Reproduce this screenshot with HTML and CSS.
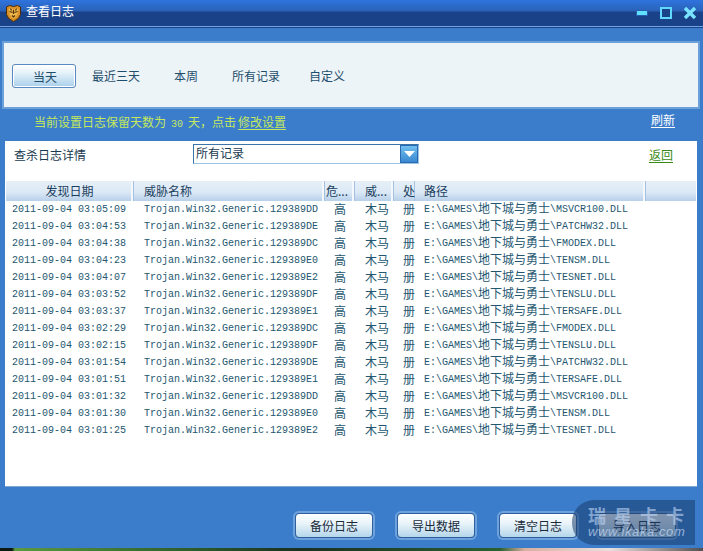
FILE: index.html
```html
<!DOCTYPE html>
<html lang="zh-CN">
<head>
<meta charset="utf-8">
<title>查看日志</title>
<link rel="stylesheet" href="styles.css">
</head>
<body>
<div class="window">
  <header class="titlebar">
    <svg class="logo" width="15" height="17" viewBox="0 0 15 17">
      <path d="M0.5 2 L3.5 0.5 L7.5 1.5 L11.5 0.5 L14.5 2 L14.5 9.5 Q13.5 14 7.5 16.5 Q1.5 14 0.5 9.5 Z" fill="#d89028" stroke="#4a2a08" stroke-width="1"/>
      <path d="M2.5 4 L5.5 3 L7.5 5 L9.5 3 L12.5 4 L11.5 9 L9.5 12.5 L7.5 13.5 L5.5 12.5 L3.5 9 Z" fill="#eeb84c"/>
      <path d="M3.5 6.5 L6.5 7.5 M11.5 6.5 L8.5 7.5 M6 10.5 L7.5 12 L9 10.5 M7.5 5 V9 M4.5 3.5 L5.5 5.5 M10.5 3.5 L9.5 5.5" stroke="#54300a" stroke-width="1.2" fill="none"/>
    </svg>
    <span class="title">查看日志</span>
    <div class="controls">
      <svg class="ctl-min" width="12" height="6" viewBox="0 0 12 6"><rect x="0.5" y="0.5" width="11" height="5" fill="#60e0ff" stroke="#2a5cb0"/></svg>
      <svg class="ctl-max" width="12" height="12" viewBox="0 0 12 12"><rect x="1" y="1" width="10" height="10" fill="#1a4288" stroke="#60d8ff" stroke-width="2"/></svg>
      <svg class="ctl-close" width="14" height="14" viewBox="0 0 14 14"><path d="M2 2 L12 12 M12 2 L2 12" stroke="#78e4ff" stroke-width="3.4"/></svg>
    </div>
  </header>

  <nav class="tabs">
    <span class="tab active">当天</span>
    <span class="tab">最近三天</span>
    <span class="tab">本周</span>
    <span class="tab">所有记录</span>
    <span class="tab">自定义</span>
  </nav>

  <div class="notice">
    <span class="notice-text">当前设置日志保留天数为<span class="latin"> 30 </span>天，点击<a class="set-link">修改设置</a></span>
    <a class="refresh">刷新</a>
  </div>

  <main class="panel">
    <div class="filter">
      <span class="filter-label">查杀日志详情</span>
      <div class="select">
        <span class="select-value">所有记录</span>
        <span class="select-btn"><svg width="11" height="6" viewBox="0 0 11 6"><path d="M0 0 H11 L5.5 6 Z" fill="#fff"/></svg></span>
      </div>
      <a class="back">返回</a>
    </div>

    <div class="grid head">
      <span class="center">发现日期</span>
      <span>威胁名称</span>
      <span class="tight">危...</span>
      <span>威...</span>
      <span class="clip">处</span>
      <span class="path">路径</span>
      <span></span>
    </div>

    <div class="grid row"><span>2011-09-04 03:05:09</span><span>Trojan.Win32.Generic.129389DD</span><span class="zh">高</span><span class="zh">木马</span><span class="zh">册</span><span>E:\GAMES\<i class="cjk">地下城与勇士</i>\MSVCR100.DLL</span><span></span></div>
    <div class="grid row"><span>2011-09-04 03:04:53</span><span>Trojan.Win32.Generic.129389DE</span><span class="zh">高</span><span class="zh">木马</span><span class="zh">册</span><span>E:\GAMES\<i class="cjk">地下城与勇士</i>\PATCHW32.DLL</span><span></span></div>
    <div class="grid row"><span>2011-09-04 03:04:38</span><span>Trojan.Win32.Generic.129389DC</span><span class="zh">高</span><span class="zh">木马</span><span class="zh">册</span><span>E:\GAMES\<i class="cjk">地下城与勇士</i>\FMODEX.DLL</span><span></span></div>
    <div class="grid row"><span>2011-09-04 03:04:23</span><span>Trojan.Win32.Generic.129389E0</span><span class="zh">高</span><span class="zh">木马</span><span class="zh">册</span><span>E:\GAMES\<i class="cjk">地下城与勇士</i>\TENSM.DLL</span><span></span></div>
    <div class="grid row"><span>2011-09-04 03:04:07</span><span>Trojan.Win32.Generic.129389E2</span><span class="zh">高</span><span class="zh">木马</span><span class="zh">册</span><span>E:\GAMES\<i class="cjk">地下城与勇士</i>\TESNET.DLL</span><span></span></div>
    <div class="grid row"><span>2011-09-04 03:03:52</span><span>Trojan.Win32.Generic.129389DF</span><span class="zh">高</span><span class="zh">木马</span><span class="zh">册</span><span>E:\GAMES\<i class="cjk">地下城与勇士</i>\TENSLU.DLL</span><span></span></div>
    <div class="grid row"><span>2011-09-04 03:03:37</span><span>Trojan.Win32.Generic.129389E1</span><span class="zh">高</span><span class="zh">木马</span><span class="zh">册</span><span>E:\GAMES\<i class="cjk">地下城与勇士</i>\TERSAFE.DLL</span><span></span></div>
    <div class="grid row"><span>2011-09-04 03:02:29</span><span>Trojan.Win32.Generic.129389DC</span><span class="zh">高</span><span class="zh">木马</span><span class="zh">册</span><span>E:\GAMES\<i class="cjk">地下城与勇士</i>\FMODEX.DLL</span><span></span></div>
    <div class="grid row"><span>2011-09-04 03:02:15</span><span>Trojan.Win32.Generic.129389DF</span><span class="zh">高</span><span class="zh">木马</span><span class="zh">册</span><span>E:\GAMES\<i class="cjk">地下城与勇士</i>\TENSLU.DLL</span><span></span></div>
    <div class="grid row"><span>2011-09-04 03:01:54</span><span>Trojan.Win32.Generic.129389DE</span><span class="zh">高</span><span class="zh">木马</span><span class="zh">册</span><span>E:\GAMES\<i class="cjk">地下城与勇士</i>\PATCHW32.DLL</span><span></span></div>
    <div class="grid row"><span>2011-09-04 03:01:51</span><span>Trojan.Win32.Generic.129389E1</span><span class="zh">高</span><span class="zh">木马</span><span class="zh">册</span><span>E:\GAMES\<i class="cjk">地下城与勇士</i>\TERSAFE.DLL</span><span></span></div>
    <div class="grid row"><span>2011-09-04 03:01:32</span><span>Trojan.Win32.Generic.129389DD</span><span class="zh">高</span><span class="zh">木马</span><span class="zh">册</span><span>E:\GAMES\<i class="cjk">地下城与勇士</i>\MSVCR100.DLL</span><span></span></div>
    <div class="grid row"><span>2011-09-04 03:01:30</span><span>Trojan.Win32.Generic.129389E0</span><span class="zh">高</span><span class="zh">木马</span><span class="zh">册</span><span>E:\GAMES\<i class="cjk">地下城与勇士</i>\TENSM.DLL</span><span></span></div>
    <div class="grid row"><span>2011-09-04 03:01:25</span><span>Trojan.Win32.Generic.129389E2</span><span class="zh">高</span><span class="zh">木马</span><span class="zh">册</span><span>E:\GAMES\<i class="cjk">地下城与勇士</i>\TESNET.DLL</span><span></span></div>
  </main>

  <footer class="actions">
    <button class="btn">备份日志</button>
    <button class="btn">导出数据</button>
    <button class="btn">清空日志</button>
    <button class="btn btn-last">导入日志</button>
  </footer>
  <div class="desktop"></div>

  <div class="watermark">
    <span class="wm-name">瑞星卡卡</span>
    <span class="wm-url">www.ikaka.com</span>
  </div>
</div>
</body>
</html>
```
FILE: styles.css
```css
* { box-sizing: border-box; }
html, body { margin: 0; padding: 0; }
body {
  width: 703px;
  height: 551px;
  overflow: hidden;
  font-family: "Liberation Mono", "Noto Sans CJK SC", monospace;
  font-size: 12px;
  color: #1f4e6c;
}
.window {
  position: relative;
  width: 703px;
  height: 551px;
  background: #3b7dcb;
  display: flex;
  flex-direction: column;
}
.titlebar {
  height: 28px;
  display: flex;
  align-items: flex-start;
  padding: 5px 6px 0 6px;
  background: linear-gradient(#2f74de 0, #2a62b8 11px, #1a4288 12px, #1a4288 26px, #6fa4e4 26px, #6fa4e4 27px, #1a4288 27px);
}
.logo { flex: none; margin-right: 5px; }
.title {
  font-family: "Noto Sans CJK SC", sans-serif;
  color: #fff;
  font-size: 12px;
  line-height: 12px;
}
.controls {
  margin-left: auto;
  display: flex;
  align-items: center;
  gap: 12px;
  height: 14px;
  margin-top: 1px;
}
.ctl-close { margin-left: -1px; }
.tabs {
  margin: 13px 3px 0 2px;
  height: 68px;
  padding: 1px 0 0 8px;
  display: flex;
  align-items: center;
  gap: 7px;
  background: #edf4f8;
  border: 2px solid #6ba0d8;
}
.tab {
  width: 64px;
  height: 24px;
  line-height: 23px;
  text-align: center;
  font-family: "Noto Sans CJK SC", sans-serif;
  color: #1f4e6c;
}
.tab:nth-child(2) { margin-left: 1px; }
.tab:nth-child(3) { margin-left: -1px; }
.tab:nth-child(4) { margin-left: -1px; }
.tab.active {
  padding-left: 2px;
  border: 1px solid #5a88c0;
  border-radius: 3px;
  background: linear-gradient(#ffffff 0, #e6f2fa 35%, #a8d0ea 100%);
  box-shadow: inset 0 0 0 1px #fff;
}
.notice {
  height: 32px;
  padding: 0 28px 7px 34px;
  display: flex;
  justify-content: space-between;
  align-items: center;
  font-family: "Noto Sans CJK SC", sans-serif;
}
.notice-text { color: #c4e85c; }
.latin {
  font-family: "Liberation Mono", monospace;
  font-size: 10px;
  white-space: pre;
  word-spacing: -1px;
}
.set-link { margin-left: 2px; text-decoration: underline; text-underline-offset: 2px; }
.refresh {
  margin-bottom: 5px;
  color: #fff;
  text-decoration: underline;
  text-underline-offset: 2px;
}
.panel {
  margin: 0 6px 0 5px;
  height: 346px;
  background: #fff;
  border-bottom: 1px solid #7fa6d4;
  padding-left: 1px;
  padding-right: 1px;
}
.filter {
  height: 40px;
  padding: 3px 23px 0 8px;
  display: flex;
  align-items: flex-start;
  font-family: "Noto Sans CJK SC", sans-serif;
  color: #1a3a50;
}
.filter-label { width: 179px; line-height: 22px; }
.select {
  width: 226px;
  height: 20px;
  display: flex;
  border: 1px solid #9cc4e4;
  border-top-color: #3a74a8;
  border-left-color: #3a74a8;
  background: #fff;
  line-height: 15px;
}
.select-value { flex: 1; padding-left: 2px; color: #1a3a50; }
.select-btn {
  width: 18px;
  display: flex;
  align-items: center;
  justify-content: center;
  background: linear-gradient(#70c0f0, #3a88d0);
  border: 1px solid #2a6ab0;
}
.back {
  margin-left: auto;
  color: #3a8a18;
  line-height: 22px;
  text-decoration: underline;
  text-underline-offset: 2px;
}
.grid {
  display: grid;
  grid-template-columns: 128px 191px 30px 39px 21px 231px 50px;
  align-items: center;
}
.head {
  height: 20px;
  background: linear-gradient(#e6eff8, #dce9f5 55%, #b8d0ea);
  font-family: "Noto Sans CJK SC", sans-serif;
  color: #1a4060;
}
.head span {
  height: 20px;
  line-height: 20px;
  padding-left: 10px;
  border-right: 1px solid #a4c2e0;
  box-shadow: inset -2px 0 0 #f4f8fc;
  white-space: nowrap;
}
.head span.center { text-align: center; padding-left: 0; }
.head span.tight { padding-left: 1px; }
.head span.clip { padding-left: 9px; border-right: 0; box-shadow: inset -1px 0 0 #a4c2e0; }
.head span.path { padding-left: 9px; }
.head span:last-child { border-right: 0; box-shadow: none; }
.row {
  height: 17px;
  line-height: 17px;
  font-size: 10px;
  color: #24566f;
}
.row span { padding-left: 10px; height: 17px; white-space: nowrap; }
.row span:first-child { padding-left: 6px; }
.row span:nth-child(6) { padding-left: 9px; }
.row span.zh {
  line-height: 15px;
  font-size: 12px;
  font-family: "Noto Sans CJK SC", sans-serif;
}
.row span.zh:nth-child(3) { padding-left: 9px; }
.row span.zh:nth-child(5) { padding-left: 9px; }
.cjk {
  font-style: normal;
  font-size: 12px;
  font-family: "Noto Sans CJK SC", sans-serif;
  line-height: 1;
  vertical-align: -1px;
}
.actions {
  flex: 1;
  padding: 26px 0 0 295px;
  display: flex;
  gap: 24px;
  align-items: flex-start;
}
.btn {
  width: 78px;
  height: 25px;
  padding: 0;
  border: 1px solid #2f5f9e;
  border-radius: 4px;
  background: linear-gradient(#ffffff 0, #eaf4fa 40%, #b4d6ea 100%);
  box-shadow: 0 0 0 2px #6ea2dc;
  font-family: "Noto Sans CJK SC", sans-serif;
  font-size: 12px;
  color: #1a2a3a;
}
.btn-last { margin-left: -3px; }
.desktop {
  height: 3px;
  background: linear-gradient(90deg, #0a1a10 0, #0a1a10 12px, #5a9a40 15px, #2a5a2a 200px, #1a3020 300px, #2a6030 500px, #d8b0a0 525px, #e8e0e0 610px, #505050 703px);
}
.watermark {
  position: absolute;
  left: 572px;
  top: 500px;
  width: 123px;
  height: 45px;
  padding: 6px 0 0 16px;
  border-radius: 22px 0 0 22px;
  background: rgba(26, 60, 110, 0.55);
  display: flex;
  flex-direction: column;
  line-height: 1;
  white-space: nowrap;
  overflow: hidden;
}
.wm-name {
  font-family: "Noto Sans CJK SC", sans-serif;
  font-size: 18px;
  font-weight: 700;
  letter-spacing: 8px;
  color: rgba(190, 215, 245, 0.6);
}
.wm-url {
  font-family: "Liberation Sans", sans-serif;
  font-size: 13px;
  font-style: italic;
  color: rgba(200, 220, 245, 0.7);
  margin-top: 1px;
  letter-spacing: 0.6px;
}
```
